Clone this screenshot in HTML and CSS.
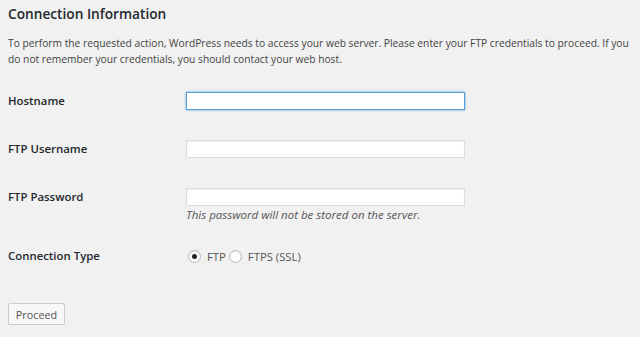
FILE: index.html
```html
<!DOCTYPE html>
<html>
<head>
<meta charset="utf-8">
<link rel="stylesheet" href="styles.css">
</head>
<body>
<div class="wrap">
  <h2 class="title">Connection Information</h2>
  <p class="intro">To perform the requested action, WordPress needs to access your web server. Please enter your FTP credentials to proceed. If you do not remember your credentials, you should contact your web host.</p>
  <div class="form">
    <div class="row">
      <label class="label" for="hostname">Hostname</label>
      <div class="field"><input id="hostname" class="input focused" type="text" autofocus></div>
    </div>
    <div class="row">
      <label class="label" for="username">FTP Username</label>
      <div class="field"><input id="username" class="input" type="text"></div>
    </div>
    <div class="row">
      <label class="label" for="password">FTP Password</label>
      <div class="field">
        <input id="password" class="input" type="password">
        <div class="desc">This password will not be stored on the server.</div>
      </div>
    </div>
    <div class="row row-radio">
      <div class="label">Connection Type</div>
      <div class="field radios">
        <label class="radio"><span class="dot checked"></span>FTP</label>
        <label class="radio"><span class="dot"></span>FTPS (SSL)</label>
      </div>
    </div>
  </div>
  <button class="button">Proceed</button>
</div>
</body>
</html>
```
FILE: styles.css
```css
html, body {
  margin: 0;
  padding: 0;
  background: #f1f1f1;
}
body {
  font-family: "Open Sans", "Noto Sans", sans-serif;
  font-size: 10.25px;
  color: #444;
}
.wrap {
  padding: 4px 8px 0;
}
.title {
  margin: 0;
  font-size: 13.7px;
  font-weight: 600;
  line-height: 20px;
  color: #23282d;
}
.intro {
  margin: 11px 0 0;
  line-height: 16px;
}
.form {
  margin-top: 10px;
}
.row {
  display: flex;
  align-items: flex-start;
  padding: 15px 0;
}
.label {
  width: 178px;
  flex: none;
  font-size: 11.4px;
  line-height: 18px;
  font-weight: 600;
  color: #23282d;
}
.field {
  flex: none;
}
.input {
  display: block;
  box-sizing: border-box;
  width: 279px;
  height: 18px;
  margin: 0;
  padding: 0 4px;
  border: 1px solid #ddd;
  background: #fff;
  box-shadow: inset 0 1px 2px rgba(0,0,0,0.07);
  outline: none;
  font-family: inherit;
  font-size: 10.5px;
}
.input.focused {
  border-color: #5b9dd9;
  box-shadow: 0 0 2px rgba(30,140,190,0.8);
}
.desc {
  margin-top: 1px;
  font-size: 11.5px;
  font-style: italic;
  line-height: 16px;
  color: #555;
}
.row-radio {
  padding: 9px 0 10px;
}
.radios {
  display: flex;
  align-items: center;
  height: 18px;
  padding-left: 2px;
}
.radio {
  display: flex;
  align-items: center;
  margin-right: 3px;
  font-size: 11.3px;
  color: #555;
}
.dot {
  box-sizing: border-box;
  width: 13px;
  height: 13px;
  border: 1px solid #b4b9be;
  border-radius: 50%;
  background: #fff;
  margin-right: 6px;
  display: flex;
  align-items: center;
  justify-content: center;
  box-shadow: inset 0 1px 2px rgba(0,0,0,0.1);
}
.dot.checked::after {
  content: "";
  width: 5px;
  height: 5px;
  border-radius: 50%;
  background: #222;
}
.button {
  margin-top: 28px;
  box-sizing: border-box;
  height: 22px;
  width: 57px;
  padding: 0;
  border: 1px solid #ccc;
  border-radius: 2px;
  background: #f7f7f7;
  box-shadow: 0 1px 0 #ccc;
  font-family: inherit;
  font-size: 10.8px;
  color: #555;
}
```
